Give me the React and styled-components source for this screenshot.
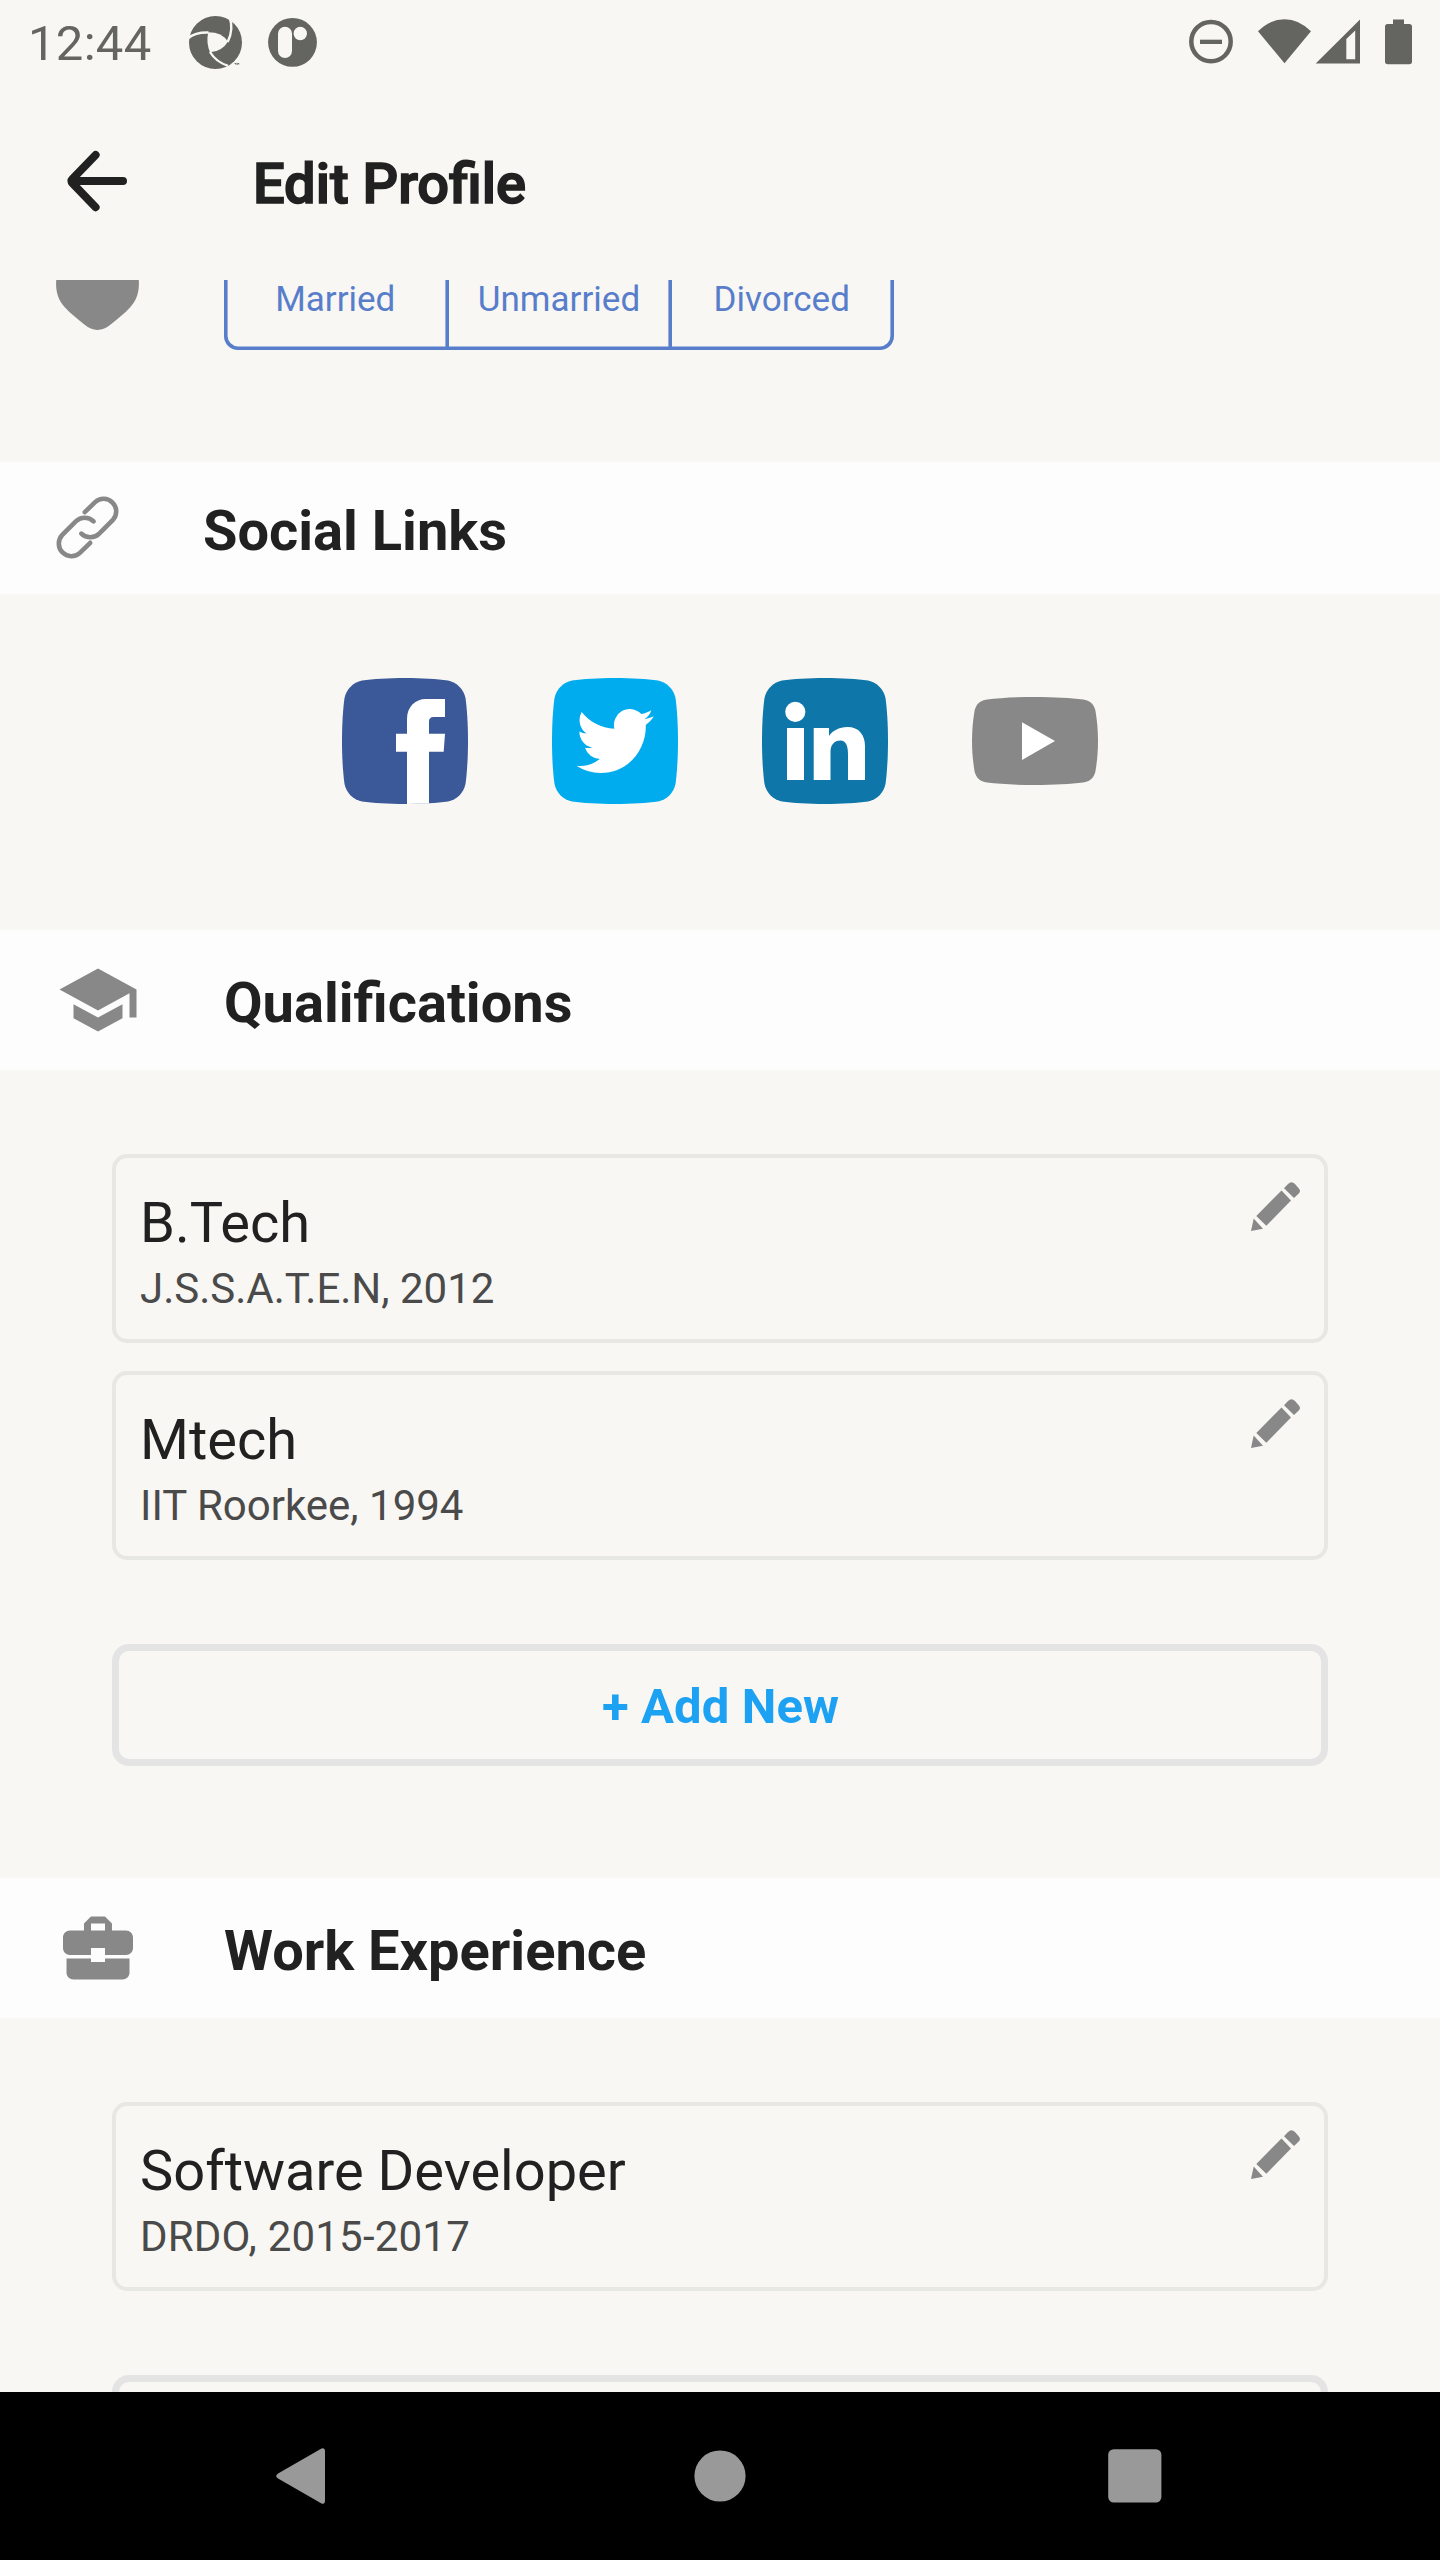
import React from "react";
import styled, { createGlobalStyle } from "styled-components";

const GlobalStyle = createGlobalStyle`
  * { box-sizing: border-box; }
  body {
    margin: 0;
    background: #f8f7f3;
    font-family: Roboto, "Noto Sans", sans-serif;
    color: #212121;
  }
  svg { display: block; flex: none; overflow: visible; }
`;

const Screen = styled.div`
  display: flex;
  flex-direction: column;
  width: 1440px;
  height: 2560px;
  overflow: hidden;
  background: #f8f7f3;
`;

const StatusBar = styled.header`
  display: flex;
  align-items: flex-start;
  flex: none;
  height: 84px;
  padding: 0 28px;
  color: #646461;
`;

const Clock = styled.span`
  width: 161px;
  padding-top: 15px;
  font-size: 49px;
  line-height: 58px;
  letter-spacing: 0.3px;
`;

const Notifications = styled.div`
  display: flex;
  gap: 26px;
  flex: 1;
  padding-top: 16px;
`;

const StatusIcons = styled.div`
  display: flex;
  padding-top: 19px;
  gap: 25px;
`;

const SignalPair = styled.div`
  display: flex;
  gap: 5px;
`;

const AppBar = styled.div`
  display: flex;
  align-items: center;
  flex: none;
  height: 196px;
  padding: 0 0 2px 67px;
`;

const AppTitle = styled.h1`
  margin: 0 0 0 126px;
  padding-top: 5px;
  font-size: 56px;
  font-weight: 500;
  line-height: 66px;
  -webkit-text-stroke: 1.6px #212121;
`;

const Content = styled.main`
  display: flex;
  flex-direction: column;
  justify-content: flex-start;
  flex: 1;
  min-height: 0;
  overflow: hidden;
`;

const StatusRow = styled.section`
  display: flex;
  flex: none;
  height: 182px;
  padding-left: 56px;
`;

const Segments = styled.div`
  display: grid;
  grid-template-columns: 224.5px 223px 222.5px;
  width: 670px;
  height: 102px;
  margin: -32px 0 0 85px;
  border-radius: 14px;
  box-shadow: inset 0 0 0 3.6px #587ecb;
`;

const Segment = styled.button`
  padding: 0 2px 0 0;
  border: 0;
  background: none;
  box-shadow: ${(p) => (p.$divided ? "inset -3.6px 0 0 #587ecb" : "none")};
  color: #587ecb;
  font: 400 35px/41px Roboto, sans-serif;
`;

const SectionHeader = styled.div`
  display: flex;
  align-items: center;
  flex: none;
  height: ${(p) => p.$height || 140}px;
  padding-left: 56px;
  gap: 84px;
  background: #fdfdfd;
  color: #888;
`;

const SectionTitle = styled.h2`
  margin: 0;
  padding-top: 5px;
  color: #212121;
  font-size: 56px;
  font-weight: 700;
  line-height: 66px;
`;

const SocialRow = styled.div`
  display: flex;
  align-items: center;
  justify-content: center;
  flex: none;
  gap: 84px;
  padding: 84px 0 126px;
`;

const SectionBody = styled.div`
  display: flex;
  flex-direction: column;
  flex: none;
  padding: 84px 112px 112px;
`;

const CardList = styled.div`
  display: flex;
  flex-direction: column;
  gap: 28px;
  margin-bottom: 84px;
`;

const Card = styled.article`
  display: flex;
  justify-content: space-between;
  height: 189px;
  padding: 24px;
  border: 4px solid #e7e8e3;
  border-radius: 15px;
`;

const CardText = styled.div`
  display: flex;
  flex-direction: column;
  gap: 8px;
  padding-top: 8px;
`;

const CardTitle = styled.h3`
  margin: 0;
  font-size: 56px;
  font-weight: 400;
  line-height: 66px;
`;

const CardDetail = styled.p`
  margin: 0;
  color: #4a4a4a;
  font-size: 42px;
  line-height: 50px;
  letter-spacing: ${(p) => p.$tracking || 0}px;
`;

const AddButton = styled.button`
  height: 122px;
  padding: 4px 0 0 1px;
  border: 7px solid #e4e4e5;
  border-radius: 17px;
  background: none;
  color: #1da1f2;
  font: 700 49px/58px Roboto, sans-serif;
  letter-spacing: 0.1px;
`;

const NavBar = styled.nav`
  display: grid;
  grid-template-columns: repeat(3, 417px);
  place-items: center;
  place-content: center;
  flex: none;
  height: 168px;
  background: #000;
`;

const PinwheelIcon = () => (
  <svg width="53" height="53" viewBox="0 0 53 53">
    <circle cx="26.5" cy="26.5" r="26.5" fill="currentColor" />
    <path d="M19.2 16.3Q33 16.2 38.9 25.7Q33 35.5 21 36.3Q17 27 19.2 16.3Z" fill="#f8f7f3" />
    <path
      d="M-1 22.2Q7 16 19.5 16.5M40.5 1Q45 13 38.7 26M21 36Q27 46 39 49.8"
      fill="none"
      stroke="#f8f7f3"
      strokeWidth="2.4"
    />
    <path d="M45.5 47h2v1.8h-1v-1h-1zM48.2 47h2v1.8h-.6v-1h-.6v1h-.8z" fill="currentColor" />
  </svg>
);

const RoundAppIcon = () => (
  <svg width="49" height="53" viewBox="0 0 49 53">
    <circle cx="24.5" cy="26.4" r="24.4" fill="currentColor" />
    <rect x="10" y="10.7" width="14" height="31.3" rx="7" fill="#f8f7f3" />
    <circle cx="32.3" cy="17.5" r="6.7" fill="#f8f7f3" />
  </svg>
);

const DndIcon = () => (
  <svg width="44" height="46" viewBox="0 0 44 46">
    <circle cx="22" cy="22.6" r="19.7" fill="none" stroke="currentColor" strokeWidth="4.5" />
    <rect x="11" y="20.7" width="22" height="4.3" fill="currentColor" />
  </svg>
);

const WifiIcon = () => (
  <svg width="53" height="46" viewBox="0 0 53 46">
    <path d="M26.5 44.3L0 12.3Q12 0.2 26.5 0.2T53 12.3Z" fill="currentColor" />
  </svg>
);

const SignalIcon = () => (
  <svg width="44" height="46" viewBox="0 0 44 46">
    <path
      fillRule="evenodd"
      d="M44 0.5V44.5H-.3ZM30.3 20V40.2H39.2V11.5Z"
      fill="currentColor"
    />
  </svg>
);

const BatteryIcon = () => (
  <svg width="27" height="46" viewBox="0 0 27 46">
    <path
      d="M8 .4H19V5H24.3Q27 5 27 7.7V42.6Q27 45.3 24.3 45.3H2.7Q0 45.3 0 42.6V7.7Q0 5 2.7 5H8Z"
      fill="currentColor"
    />
  </svg>
);

const BackIcon = () => (
  <svg width="60" height="60" viewBox="0 0 60 60">
    <path
      d="M28.6 4L5.4 28.1Q3.4 30.1 5.4 32.1L28.6 56.2M5 30.1H56"
      fill="none"
      stroke="#212121"
      strokeWidth="8"
      strokeLinecap="round"
      strokeLinejoin="round"
    />
  </svg>
);

const HeartIcon = () => (
  <svg width="83" height="50" viewBox="0 0 83 50">
    <path
      d="M.2 0C-.6 12.5 2.5 20.5 9 27.5C14 33 21 38.5 28 44.3Q41.5 55.7 55 44.3C62 38.5 69 33 74 27.5C80.5 20.5 83.6 12.5 82.8 0Z"
      fill="#888"
    />
  </svg>
);

const linkPath = "M28.8 16.2L39.1 6.1A12.6 12.6 0 0 1 56.9 23.9L43.2 37.6A12.6 12.6 0 0 1 25.4 37.6";

const LinkIcon = () => (
  <svg width="63" height="64" viewBox="0 0 63 64">
    <g fill="none" stroke="currentColor" strokeWidth="4.6" strokeLinecap="round">
      <path d={linkPath} />
      <path d={linkPath} transform="rotate(180 31.5 31.5)" />
    </g>
  </svg>
);

const SchoolIcon = () => (
  <svg width="84" height="84" viewBox="0 0 24 24" fill="currentColor">
    <path d="M5 13.18v4L12 21l7-3.82v-4L12 17l-7-3.82zM12 3L1 9l11 6 9-4.91V17h2V9L12 3z" />
  </svg>
);

const BriefcaseIcon = () => (
  <svg width="84" height="84" viewBox="0 0 24 24" fill="currentColor">
    <path d="M10 16v-1H3.01L3 19c0 1.11.89 2 2 2h14c1.11 0 2-.89 2-2v-4h-7v1h-4zm10-9h-4.01V5l-2-2h-4l-2 2v2H4c-1.1 0-2 .9-2 2v3c0 1.11.89 2 2 2h6v-2h4v2h6c1.1 0 2-.9 2-2V9c0-1.1-.9-2-2-2zm-6 0h-4V5h4v2z" />
  </svg>
);

const PencilIcon = () => (
  <svg width="49" height="49" viewBox="0 0 49 49" fill="#888">
    <path d="M0 49L2.7 36.5L12 46.7Z" />
    <path d="M5.3 34L30.5 8.4L40 18.5L15.3 43.7Z" />
    <path d="M33 6.2L37 2Q40.5 -1.5 44 2L47.7 6.2Q50.3 9 47.7 11.6L43 15.9Z" />
  </svg>
);

const tilePath =
  "M63 0C80 0 95 1 106 2.5C115 4.5 121.5 11 123.5 20C125 31 126 46 126 63S125 95 123.5 106C121.5 115 115 121.5 106 123.5C95 125 80 126 63 126S31 125 20 123.5C11 121.5 4.5 115 2.5 106C1 95 0 80 0 63S1 31 2.5 20C4.5 11 11 4.5 20 2.5C31 1 46 0 63 0Z";

const SocialTile = ({ color, children }) => (
  <svg width="126" height="126" viewBox="0 0 126 126">
    <path d={tilePath} fill={color} />
    {children}
  </svg>
);

const FacebookLogo = () => (
  <SocialTile color="#3b5998">
    <path
      d="M65 126V73.7H54V55.7H65V41C65 29 73 21 84 21H103V39H91.5Q87 39 87 43.5V55.7H103L101.7 73.7H87V125.6Z"
      fill="#fff"
    />
  </SocialTile>
);

const TwitterLogo = () => (
  <SocialTile color="#00aced">
    <path
      transform="translate(24.4 23.6) scale(3.22 3.28)"
      d="M23.953 4.57a10 10 0 01-2.825.775 4.958 4.958 0 002.163-2.723c-.951.555-2.005.959-3.127 1.184a4.92 4.92 0 00-8.384 4.482C7.69 8.095 4.067 6.13 1.64 3.162a4.822 4.822 0 00-.666 2.475c0 1.71.87 3.213 2.188 4.096a4.904 4.904 0 01-2.228-.616v.06a4.923 4.923 0 003.946 4.827 4.996 4.996 0 01-2.212.085 4.936 4.936 0 004.604 3.417 9.867 9.867 0 01-6.102 2.105c-.39 0-.779-.023-1.17-.067a13.995 13.995 0 007.557 2.209c9.053 0 13.998-7.496 13.998-13.985 0-.21 0-.42-.015-.63A9.935 9.935 0 0024 4.59z"
      fill="#fff"
    />
  </SocialTile>
);

const LinkedInLogo = () => (
  <SocialTile color="#0e76a8">
    <g fill="#fff">
      <circle cx="33.3" cy="33.8" r="10.1" />
      <rect x="25" y="50" width="17" height="52" />
      <path d="M51.7 50H67V58C70 53 77 49 85.5 49C97 49 103 57 103 68V102H86V76C86 68 84 62.5 78.5 62.5C72 62.5 68.5 67 68.5 74V102H51.7Z" />
    </g>
  </SocialTile>
);

const YouTubeLogo = () => (
  <svg width="126" height="88" viewBox="0 0 126 88">
    <path
      d="M63 0C82 0 99 1 111 2.5C118 3.5 122 7 123.5 14C125 23 126 33 126 44S125 65 123.5 74C122 81 118 84.5 111 85.5C99 87 82 88 63 88S27 87 15 85.5C8 84.5 4 81 2.5 74C1 65 0 55 0 44S1 23 2.5 14C4 7 8 3.5 15 2.5C27 1 44 0 63 0Z"
      fill="#888"
    />
    <path d="M50 25.3L83 44L50 63Z" fill="#fff" />
  </svg>
);

const NavBack = () => (
  <svg width="60" height="60" viewBox="0 0 60 60">
    <path
      d="M5.5 27.2L48.5 2.6Q52 1.2 52 5V55Q52 58.8 48.5 57.4L5.5 32.8Q.8 30 5.5 27.2Z"
      fill="#999"
    />
  </svg>
);

const NavHome = () => (
  <svg width="60" height="60" viewBox="0 0 60 60">
    <circle cx="30" cy="30" r="25.6" fill="#999" />
  </svg>
);

const NavRecents = () => (
  <svg width="60" height="60" viewBox="0 0 60 60">
    <rect x="1.2" y="3.2" width="53.2" height="53.4" rx="5.5" fill="#999" />
  </svg>
);

const InfoCard = ({ title, detail, tracking }) => (
  <Card>
    <CardText>
      <CardTitle>{title}</CardTitle>
      <CardDetail $tracking={tracking}>{detail}</CardDetail>
    </CardText>
    <PencilIcon />
  </Card>
);

const qualifications = [
  { title: "B.Tech", detail: "J.S.S.A.T.E.N, 2012" },
  { title: "Mtech", detail: "IIT Roorkee, 1994" },
];

const jobs = [{ title: "Software Developer", detail: "DRDO, 2015-2017", tracking: 0.2 }];

const EntrySection = ({ icon, title, entries, addLabel }) => (
  <>
    <SectionHeader>
      {icon}
      <SectionTitle>{title}</SectionTitle>
    </SectionHeader>
    <SectionBody>
      <CardList>
        {entries.map((entry) => (
          <InfoCard key={entry.title} {...entry} />
        ))}
      </CardList>
      <AddButton>{addLabel}</AddButton>
    </SectionBody>
  </>
);

export default function App() {
  return (
    <>
      <GlobalStyle />
      <Screen>
        <StatusBar>
          <Clock>12:44</Clock>
          <Notifications>
            <PinwheelIcon />
            <RoundAppIcon />
          </Notifications>
          <StatusIcons>
            <DndIcon />
            <SignalPair>
              <WifiIcon />
              <SignalIcon />
            </SignalPair>
            <BatteryIcon />
          </StatusIcons>
        </StatusBar>
        <AppBar>
          <BackIcon />
          <AppTitle>Edit Profile</AppTitle>
        </AppBar>
        <Content>
          <StatusRow>
            <HeartIcon />
            <Segments>
              <Segment $divided>Married</Segment>
              <Segment $divided>Unmarried</Segment>
              <Segment>Divorced</Segment>
            </Segments>
          </StatusRow>
          <SectionHeader $height={132}>
            <LinkIcon />
            <SectionTitle>Social Links</SectionTitle>
          </SectionHeader>
          <SocialRow>
            <FacebookLogo />
            <TwitterLogo />
            <LinkedInLogo />
            <YouTubeLogo />
          </SocialRow>
          <EntrySection
            icon={<SchoolIcon />}
            title="Qualifications"
            entries={qualifications}
            addLabel="+ Add New"
          />
          <EntrySection icon={<BriefcaseIcon />} title="Work Experience" entries={jobs} />
        </Content>
        <NavBar>
          <NavBack />
          <NavHome />
          <NavRecents />
        </NavBar>
      </Screen>
    </>
  );
}
